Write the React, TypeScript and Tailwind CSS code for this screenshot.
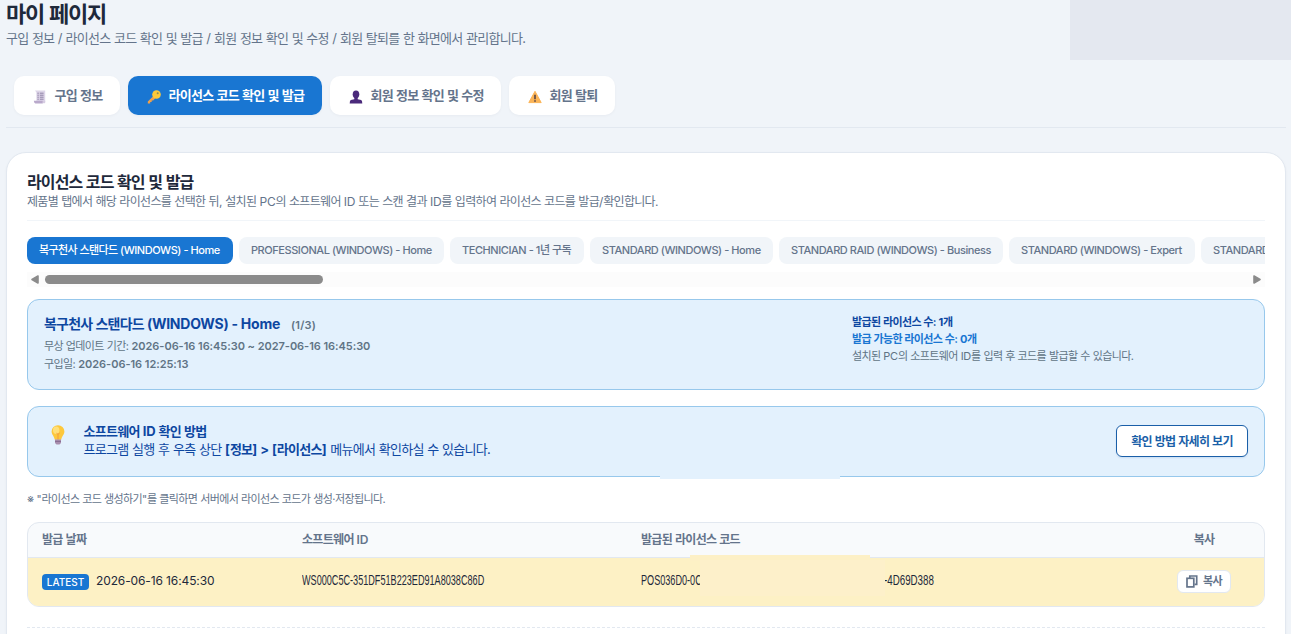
import React, { useState } from "react";

const menus = [
  { key: "purchase", label: "구입 정보", width: "w-[106px]" },
  { key: "license", label: "라이선스 코드 확인 및 발급", width: "w-[194px]" },
  { key: "profile", label: "회원 정보 확인 및 수정", width: "w-[171px]" },
  { key: "withdraw", label: "회원 탈퇴", width: "w-[106px]" },
];

const products = [
  { label: "복구천사 스탠다드 (WINDOWS) - Home", width: "w-[206px]" },
  { label: "PROFESSIONAL (WINDOWS) - Home", width: "w-[205px]" },
  { label: "TECHNICIAN - 1년 구독", width: "w-[134px]" },
  { label: "STANDARD (WINDOWS) - Home", width: "w-[183px]" },
  { label: "STANDARD RAID (WINDOWS) - Business", width: "w-[224px]" },
  { label: "STANDARD (WINDOWS) - Expert", width: "w-[186px]" },
  { label: "STANDARD", width: "w-[80px]" },
];

// Tightens the hangul runs only, latin letters and digits keep their spacing
const Ko: React.FC<{ children: string }> = ({ children }) => (
  <>
    {children.split(/([가-힣]+)/).map((part, i) =>
      i % 2 === 1 ? (
        <span key={i} className="tracking-[-0.056em]">
          {part}
        </span>
      ) : (
        part
      )
    )}
  </>
);

const ReceiptIcon = () => (
  <svg width="14" height="14" viewBox="0 0 14 14">
    <path d="M2 .6h10.200v11.600H3.400V2.400L2 .6z" fill="#ddd5e8" />
    <path d="M.8 10.800h9v2.600H2.300Q.9 13 .8 10.800z" fill="#b9a9cb" />
    <path d="M9.800 10.800h2.400v2l-1.200.6-1.200-.6z" fill="#d6cce2" />
    <path
      d="M4.400 3.200h1.400M6.800 3.200h3.800M4.400 5.200h1.400M6.800 5.200h3.800M4.400 7.200h1.400M6.800 7.200h3.800M4.400 9.200h1.400M6.800 9.200h3.800"
      stroke="#8f82a5"
      strokeWidth="1"
    />
  </svg>
);

const KeyIcon = () => (
  <svg width="14" height="14" viewBox="0 0 14 14">
    <path d="M7.200 5.200L.8 11.400v2h2.400v-1.500h1.500v-1.500h1.500l2.800-2.800z" fill="#f0a04b" />
    <circle cx="9.500" cy="4.500" r="4.300" fill="#fdc93a" />
    <circle cx="10.700" cy="3.300" r="1" fill="#8a8a5a" />
  </svg>
);

const UserIcon = () => (
  <svg width="14" height="14" viewBox="0 0 14 14">
    <ellipse cx="7" cy="4.300" rx="3.300" ry="3.900" fill="#4b2a7b" />
    <path d="M5.300 7h3.400v2.200l3.400.8q1.200.4 1.200 3.400H.7Q.7 10.400 1.900 10l3.400-.8z" fill="#4b2a7b" />
  </svg>
);

const WarningIcon = () => (
  <svg width="14" height="14" viewBox="0 0 14 14">
    <path d="M7 1.300L.8 12.600h12.400z" fill="#fbb457" stroke="#fbb457" strokeLinejoin="round" />
    <path d="M7 4.700v4.600M7 10.300v1.500" stroke="#4b3b45" strokeWidth="1.500" />
  </svg>
);

const BulbIcon = () => (
  <svg width="14" height="20" viewBox="0 0 14 20">
    <path d="M7 .3a6.300 6.300 0 0 1 6.400 6.300c0 3-2.500 4.400-3.200 8.200H3.800C3.100 11 .6 9.600.6 6.600A6.300 6.300 0 0 1 7 .3z" fill="#fdc83c" />
    <ellipse cx="5.200" cy="5.200" rx="3.200" ry="3.700" fill="#ffe07a" />
    <path d="M5.400 8.200l1.600 1 1.600-1M7 9.200v5.300" stroke="#f3973c" strokeWidth="0.9" fill="none" />
    <path d="M4 14.600h6v3.300L8.500 19.500h-3L4 17.900z" fill="#a98fae" />
    <path d="M4 16.400h6" stroke="#7d6289" strokeWidth="0.800" />
  </svg>
);

const CopyIcon = () => (
  <svg width="12" height="13" viewBox="0 0 12 13" fill="none" stroke="#64748b" strokeWidth="1.700">
    <path d="M3.800 3V1h6.900v8.400H8.500" />
    <rect x="1" y="3.300" width="6.800" height="8.600" />
  </svg>
);

const menuIcons: Record<string, React.ReactNode> = {
  purchase: <ReceiptIcon />,
  license: <KeyIcon />,
  profile: <UserIcon />,
  withdraw: <WarningIcon />,
};

const App: React.FC = () => {
  const [activeMenu, setActiveMenu] = useState("license");
  const [activeProduct, setActiveProduct] = useState(0);

  return (
    <div className="relative h-[634px] w-[1291px] overflow-hidden bg-[#f0f4f9] px-[6px] font-[Inter,'Noto_Sans_CJK_KR',sans-serif] tracking-[-0.016em] text-[#64748b]">
      <div className="absolute top-0 right-0 h-[60px] w-[221px] bg-[#e4e8f0]"></div>

      {/* Header */}
      <h1 className="h-7 text-[22px] leading-7 font-bold whitespace-nowrap text-[#1e293b]">
        <Ko>마이 페이지</Ko>
      </h1>
      <p className="h-5 text-[13px] leading-5 whitespace-nowrap">
        <Ko>구입 정보 / 라이선스 코드 확인 및 발급 / 회원 정보 확인 및 수정 / 회원 탈퇴를 한 화면에서 관리합니다.</Ko>
      </p>

      {/* Menu */}
      <div className="mt-5 flex h-[60px] w-[1280px] gap-2 border-b border-[#e2e8f0] px-2 pt-2">
        {menus.map((menu) => (
          <button
            key={menu.key}
            className={`flex h-[39px] items-center gap-2 rounded-[10px] pl-[18.500px] text-[13px] font-semibold whitespace-nowrap shadow-[0_1px_3px_rgba(15,23,42,0.04)] ${menu.width} ${
              activeMenu === menu.key ? "bg-[#1976d2] text-white" : "bg-white text-[#64748b]"
            }`}
            onClick={() => setActiveMenu(menu.key)}
          >
            <span className="pt-[2px]">{menuIcons[menu.key]}</span>
            <span>
              <Ko>{menu.label}</Ko>
            </span>
          </button>
        ))}
      </div>

      {/* Card */}
      <div className="mt-6 h-[520px] w-[1280px] rounded-[20px] border border-[#e2e8f0] bg-white px-5 pt-[19px] shadow-[0_1px_3px_rgba(15,23,42,0.04)]">
        <h2 className="h-5 text-base leading-5 font-bold whitespace-nowrap text-[#1e293b]">
          <Ko>라이선스 코드 확인 및 발급</Ko>
        </h2>
        <p className="h-[29px] border-b border-[#f1f5f9] text-xs leading-[19px] whitespace-nowrap">
          <Ko>제품별 탭에서 해당 라이선스를 선택한 뒤, 설치된 PC의 소프트웨어 ID 또는 스캔 결과 ID를 입력하여 라이선스 코드를 발급/확인합니다.</Ko>
        </p>

        {/* Product tabs */}
        <div className="mt-4 flex gap-[6px] overflow-hidden">
          {products.map((product, index) => (
            <button
              key={product.label}
              className={`h-[27px] shrink-0 rounded-lg pl-3 text-left text-[11px] font-medium tracking-[-0.04em] whitespace-nowrap ${product.width} ${
                activeProduct === index ? "bg-[#1976d2] text-white" : "bg-[#f1f5f9] text-[#64748b]"
              }`}
              onClick={() => setActiveProduct(index)}
            >
              <Ko>{product.label}</Ko>
            </button>
          ))}
        </div>
        <div className="mt-2 flex h-[15px] items-center justify-between bg-[#fcfcfc] pr-1 pl-1">
          <div className="flex items-center gap-[6px]">
            <svg width="8" height="9" viewBox="0 0 8 9">
              <path d="M7 1v7L1 4.500z" fill="#8b8b8b" stroke="#8b8b8b" strokeLinejoin="round" strokeWidth="1.600" />
            </svg>
            <div className="h-[9px] w-[278px] rounded-full bg-[#8b8b8b]"></div>
          </div>
          <svg width="8" height="9" viewBox="0 0 8 9">
            <path d="M1 1v7l6-3.500z" fill="#8b8b8b" stroke="#8b8b8b" strokeLinejoin="round" strokeWidth="1.600" />
          </svg>
        </div>

        {/* Selected product */}
        <div className="mt-3 flex h-[91px] rounded-xl border border-[#97c8ec] bg-[#e3f1fd] px-4 pt-[14px] whitespace-nowrap text-[#607485]">
          <div className="w-[808px]">
            <div className="flex h-5 items-center gap-[11px] leading-5">
              <span className="text-sm font-bold text-[#0d47a1]">
                <Ko>복구천사 스탠다드 (WINDOWS) - Home</Ko>
              </span>
              <span className="pt-[2px] text-[11px] font-semibold tracking-[0.02em]">(1/3)</span>
            </div>
            <p className="mt-[3px] text-[11px] leading-[18px]">
              <Ko>무상 업데이트 기간: </Ko>
              <b className="font-semibold tracking-[-0.004em]">2026-06-16 16:45:30 ~ 2027-06-16 16:45:30</b>
            </p>
            <p className="text-[11px] leading-[18px]">
              <Ko>구입일: </Ko>
              <b className="font-semibold tracking-[-0.004em]">2026-06-16 12:25:13</b>
            </p>
          </div>
          <div className="text-[11px] leading-[17px]">
            <p className="font-bold text-[#0d47a1]">
              <Ko>발급된 라이선스 수: 1개</Ko>
            </p>
            <p className="font-bold text-[#1976d2]">
              <Ko>발급 가능한 라이선스 수: 0개</Ko>
            </p>
            <p>
              <Ko>설치된 PC의 소프트웨어 ID를 입력 후 코드를 발급할 수 있습니다.</Ko>
            </p>
          </div>
        </div>

        {/* Guide */}
        <div className="relative mt-4 flex h-[71px] rounded-xl border border-[#97c8ec] bg-[#e3f1fd] pr-4 pl-[22.500px] whitespace-nowrap">
          <div className="w-[33px] pt-[18px]">
            <BulbIcon />
          </div>
          <div className="flex-1 pt-[15px] text-[13px] leading-[18px] tracking-[-0.005em] text-[#0d47a1]">
            <p className="font-bold">
              <Ko>소프트웨어 ID 확인 방법</Ko>
            </p>
            <p>
              <Ko>프로그램 실행 후 우측 상단 </Ko>
              <b>
                <Ko>{"[정보] > [라이선스]"}</Ko>
              </b>
              <Ko> 메뉴에서 확인하실 수 있습니다.</Ko>
            </p>
          </div>
          <button className="mt-[18px] h-8 w-[132px] rounded-md border border-[#1a5fa8] bg-white pt-px text-xs font-semibold text-[#1a5fa8] shadow-[0_1px_2px_rgba(13,71,161,0.12)]">
            <Ko>확인 방법 자세히 보기</Ko>
          </button>
          <div className="absolute top-[66px] left-[632px] h-[6px] w-[180px] bg-[#e3f1fd]"></div>
        </div>

        <p className="mt-[14px] h-[16px] text-[11px] leading-[17px] tracking-[-0.026em] whitespace-nowrap">
          <Ko>※ "라이선스 코드 생성하기"를 클릭하면 서버에서 라이선스 코드가 생성·저장됩니다.</Ko>
        </p>

        {/* Issued codes */}
        <div className="relative mt-[15px] h-[85px] rounded-xl border border-[#e2e8f0] bg-[#f8fafc] whitespace-nowrap">
          <div className="grid h-[35px] grid-cols-[260px_339px_503px_1fr] items-center border-b border-[#e2e8f0] pl-[14px] text-xs font-semibold">
            <div><Ko>발급 날짜</Ko></div>
            <div><Ko>소프트웨어 ID</Ko></div>
            <div><Ko>발급된 라이선스 코드</Ko></div>
            <div className="text-center"><Ko>복사</Ko></div>
          </div>
          <div className="grid h-[48px] grid-cols-[260px_339px_503px_1fr] items-center rounded-b-[11px] bg-[#fdf1c5] pb-px pl-[14px] text-[#1e293b]">
            <div className="flex items-center gap-[7px]">
              <span className="h-4 w-[47px] rounded bg-[#1976d2] text-center text-[10px] leading-4 font-medium tracking-normal text-white">
                LATEST
              </span>
              <span className="pb-px text-xs tracking-[-0.01em]">2026-06-16 16:45:30</span>
            </div>
            <div className="w-0 origin-left scale-x-[0.607] pb-[2px] font-['Liberation_Sans',sans-serif] text-[15px] tracking-normal">
              WS000C5C-351DF51B223ED91A8038C86D
            </div>
            <div className="flex pb-[2px] font-['Liberation_Sans',sans-serif] text-[15px] tracking-normal">
              <span className="w-[243px] origin-left scale-x-[0.607]">POS036D0-0C</span>
              <span className="w-0 origin-left scale-x-[0.650]">-4D69D388</span>
            </div>
            <div className="flex justify-center">
              <button className="flex h-[23px] w-[54px] items-center justify-center gap-[5px] rounded-md border border-[#e2e8f0] bg-white text-[11px] font-semibold text-[#64748b]">
                <CopyIcon />
                <span><Ko>복사</Ko></span>
              </button>
            </div>
          </div>
          <div className="absolute top-[32px] left-[662px] h-[6px] w-[180px] bg-[#fdf0c6]"></div>
          <div className="absolute top-[37px] left-[672px] h-[36px] w-[185px] bg-[#fdf0ca]"></div>
        </div>

        <div className="mt-5 border-t border-dashed border-[#e2e8f0]"></div>
      </div>
    </div>
  );
};

export default App;
